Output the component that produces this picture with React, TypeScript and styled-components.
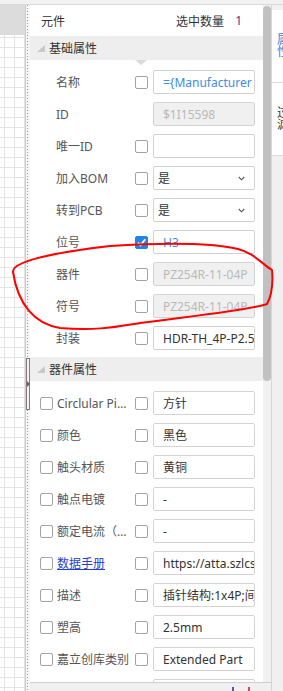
import styled, { createGlobalStyle } from "styled-components";

const GlobalStyle = createGlobalStyle`
  html, body {
    margin: 0;
    padding: 0;
  }
  body {
    font-family: "Noto Sans", "Noto Sans CJK SC", sans-serif;
    font-size: 12px;
    color: #333;
    background: #efefef;
  }
  * {
    box-sizing: border-box;
  }
`;

const Page = styled.div`
  position: relative;
  width: 283px;
  height: 691px;
  overflow: hidden;
  display: flex;
  flex-direction: column;
`;

const TopStrip = styled.div`
  height: 5px;
  flex-shrink: 0;
  background: #f2f2f2;
  border-bottom: 1px solid #d9d9d9;
`;

const Main = styled.div`
  flex: 1;
  min-height: 0;
  display: flex;
`;

const Canvas = styled.div`
  width: 26px;
  flex-shrink: 0;
  display: flex;
  flex-direction: column;
  border-right: 1px solid #cbcbcb;
`;

const Ruler = styled.div`
  height: 30px;
  background: #dcdcdc;
`;

const Grid = styled.div`
  flex: 1;
  background-color: #fff;
  background-image: linear-gradient(#e3e3e3 1px, transparent 1px),
    linear-gradient(90deg, #e3e3e3 1px, transparent 1px);
  background-size: 10px 10px;
  background-position: 4px 2px;
`;

const Splitter = styled.div`
  position: relative;
  width: 4px;
  flex-shrink: 0;
  background-color: #f7f7f7;
  background-image: linear-gradient(#9a9a9a 50%, transparent 50%);
  background-size: 1px 3px;
  background-repeat: repeat-y;
  background-position: 1px 0;
`;

const Handle = styled.div`
  position: absolute;
  left: 0;
  top: 353px;
  width: 4px;
  height: 52px;
  border: 1px solid #8c7878;
  background: #f3f3f3;
  display: flex;
  align-items: center;
  &::after {
    content: "";
    border-left: 3px solid #6e5e5e;
    border-top: 3px solid transparent;
    border-bottom: 3px solid transparent;
  }
`;

const Middle = styled.div`
  flex: 1;
  min-width: 0;
  display: flex;
  flex-direction: column;
`;

const Body = styled.div`
  flex: 1;
  min-height: 0;
  display: flex;
`;

const Panel = styled.div`
  flex: 1;
  min-width: 0;
  background: #fff;
  overflow: hidden;
  display: flex;
  flex-direction: column;
`;

const PanelHeader = styled.div`
  height: 31px;
  flex-shrink: 0;
  display: flex;
  align-items: center;
  justify-content: space-between;
  padding: 0 21px 0 11px;
  color: #333;
`;

const Count = styled.span`
  display: flex;
  gap: 11px;
  b {
    font-weight: 400;
    color: #4e3b8c;
  }
`;

const SectionHeader = styled.div<{ $pointer?: boolean }>`
  position: relative;
  height: 24px;
  flex-shrink: 0;
  display: flex;
  align-items: center;
  gap: 4px;
  padding-left: 7px;
  background: #eeeeee;
  color: #333;
  &::before {
    content: "";
    border-bottom: 7px solid #c9c9c9;
    border-left: 8px solid transparent;
  }
  ${(p) =>
    p.$pointer &&
    `&::after {
      content: "";
      position: absolute;
      left: 105px;
      top: 24px;
      border-top: 5px solid #dadada;
      border-left: 6px solid transparent;
      border-right: 6px solid transparent;
    }`}
`;

const SectionBody = styled.div`
  padding: 6px 0 3px;
  flex-shrink: 0;
`;

const FieldRow = styled.div<{ $lead?: boolean }>`
  height: 32px;
  display: flex;
  align-items: center;
  padding-left: ${(p) => (p.$lead ? "10px" : "26px")};
`;

const Label = styled.span<{ $lead?: boolean; $link?: boolean }>`
  width: ${(p) => (p.$lead ? "78px" : "79px")};
  flex-shrink: 0;
  padding-right: 2px;
  color: ${(p) => (p.$link ? "#1f3fd6" : "#555")};
  text-decoration: ${(p) => (p.$link ? "underline" : "none")};
  white-space: nowrap;
  overflow: hidden;
  text-overflow: ellipsis;
`;

const CheckSlot = styled.span`
  width: 13px;
  height: 13px;
  flex-shrink: 0;
  margin-right: 5px;
`;

const Checkbox = styled.span<{ $checked?: boolean; $lead?: boolean }>`
  width: 13px;
  height: 13px;
  flex-shrink: 0;
  display: flex;
  align-items: center;
  justify-content: center;
  margin-right: ${(p) => (p.$lead ? "4px" : "5px")};
  border: 1px solid ${(p) => (p.$checked ? "#1f86e8" : "#a3a3a3")};
  border-radius: 2px;
  background: ${(p) => (p.$checked ? "#1f86e8" : "#fff")};
`;

type Tone = "plain" | "link" | "disabled";

const ValueBox = styled.div<{ $tone: Tone; $select?: boolean }>`
  width: 102px;
  height: 24px;
  flex-shrink: 0;
  display: flex;
  align-items: center;
  justify-content: space-between;
  padding: ${(p) => (p.$select ? "0 9px 0 4px" : "0 1px 0 9px")};
  border: 1px solid #d3d3d3;
  border-radius: 2px;
  background: ${(p) => (p.$tone === "disabled" ? "#f0f0f0" : "#fff")};
  color: ${(p) =>
    p.$tone === "link" ? "#3d8ce6" : p.$tone === "disabled" ? "#b9b9b9" : "#333"};
  white-space: nowrap;
  overflow: hidden;
`;

const ScrollTrack = styled.div`
  width: 8px;
  flex-shrink: 0;
  background: #f1f1f1;
  padding-top: 1px;
`;

const Thumb = styled.div`
  height: 375px;
  border-radius: 4px;
  background: #c1c1c1;
`;

const BottomBar = styled.div`
  height: 9px;
  flex-shrink: 0;
  display: flex;
  align-items: flex-end;
  justify-content: flex-end;
  gap: 14px;
  padding-right: 21px;
  background: #f0f0f0;
  border-top: 1px solid #cfcfcf;
`;

const Mark = styled.span<{ $color: string }>`
  width: 2px;
  height: 4px;
  background: ${(p) => p.$color};
`;

const RightStrip = styled.div`
  width: 12px;
  flex-shrink: 0;
  display: flex;
  flex-direction: column;
  padding-top: 5px;
  background: #f0f0f0;
  border-left: 1px solid #d6d6d6;
  overflow: hidden;
`;

const Tab = styled.div<{ $active?: boolean }>`
  height: 73px;
  flex-shrink: 0;
  display: flex;
  flex-direction: column;
  justify-content: center;
  padding-left: 5px;
  background: #fff;
  border-bottom: 1px solid #dcdcdc;
  color: ${(p) => (p.$active ? "#3e7fd6" : "#333")};
  span {
    display: block;
    width: 12px;
    line-height: 12px;
  }
`;

const Annotation = styled.svg`
  position: absolute;
  left: 0;
  top: 0;
  pointer-events: none;
`;

const Chevron = () => (
  <svg width="7" height="5" viewBox="0 0 7 5">
    <polyline points="0.8,1 3.5,3.8 6.2,1" fill="none" stroke="#555" strokeWidth="1.1" />
  </svg>
);

const Tick = () => (
  <svg width="11" height="11" viewBox="0 0 11 11">
    <polyline points="2,5.6 4.5,8.4 9.2,2.2" fill="none" stroke="#fff" strokeWidth="1.8" />
  </svg>
);

type Field = {
  label: string;
  value?: string;
  tone?: Tone;
  check?: boolean;
  checked?: boolean;
  select?: boolean;
  link?: boolean;
};

const basic: Field[] = [
  { label: "名称", value: "={Manufacturer Part}", tone: "link", check: true },
  { label: "ID", value: "$1I15598", tone: "disabled" },
  { label: "唯一ID", value: "", check: true },
  { label: "加入BOM", value: "是", check: true, select: true },
  { label: "转到PCB", value: "是", check: true, select: true },
  { label: "位号", value: "H3", tone: "link", check: true, checked: true },
  { label: "器件", value: "PZ254R-11-04P", tone: "disabled", check: true },
  { label: "符号", value: "PZ254R-11-04P", tone: "disabled", check: true },
  { label: "封装", value: "HDR-TH_4P-P2.54-V-M", check: true },
];

const device: Field[] = [
  { label: "Circlular Pin Shape", value: "方针" },
  { label: "颜色", value: "黑色" },
  { label: "触头材质", value: "黄铜" },
  { label: "触点电镀", value: "-" },
  { label: "额定电流（A）", value: "-" },
  { label: "数据手册", value: "https://atta.szlcsc.com/upload", link: true },
  { label: "描述", value: "插针结构:1x4P;间距:2.54mm" },
  { label: "塑高", value: "2.5mm" },
  { label: "嘉立创库类别", value: "Extended Part" },
  { label: "供应商", value: "LCSC" },
];

export default function App() {
  return (
    <>
      <GlobalStyle />
      <Page>
        <TopStrip />
        <Main>
          <Canvas>
            <Ruler />
            <Grid />
          </Canvas>
          <Splitter>
            <Handle />
          </Splitter>
          <Middle>
            <Body>
              <Panel>
                <PanelHeader>
                  <span>元件</span>
                  <Count>
                    选中数量<b>1</b>
                  </Count>
                </PanelHeader>
                <SectionHeader $pointer>基础属性</SectionHeader>
                <SectionBody>
                  {basic.map((f) => (
                    <FieldRow key={f.label}>
                      <Label>{f.label}</Label>
                      {f.check ? (
                        <Checkbox $checked={f.checked}>{f.checked && <Tick />}</Checkbox>
                      ) : (
                        <CheckSlot />
                      )}
                      <ValueBox $tone={f.tone ?? "plain"} $select={f.select}>
                        <span>{f.value}</span>
                        {f.select && <Chevron />}
                      </ValueBox>
                    </FieldRow>
                  ))}
                </SectionBody>
                <SectionHeader>器件属性</SectionHeader>
                <SectionBody>
                  {device.map((f) => (
                    <FieldRow key={f.label} $lead>
                      <Checkbox $lead />
                      <Label $lead $link={f.link}>
                        {f.label}
                      </Label>
                      <Checkbox />
                      <ValueBox $tone="plain">
                        <span>{f.value}</span>
                      </ValueBox>
                    </FieldRow>
                  ))}
                </SectionBody>
              </Panel>
              <ScrollTrack>
                <Thumb />
              </ScrollTrack>
            </Body>
            <BottomBar>
              <Mark $color="#6b4e9e" />
              <Mark $color="#e0405a" />
            </BottomBar>
          </Middle>
          <RightStrip>
            <Tab $active>
              <span>属</span>
              <span>性</span>
            </Tab>
            <Tab>
              <span>过</span>
              <span>滤</span>
            </Tab>
          </RightStrip>
        </Main>
        <Annotation width="283" height="691" viewBox="0 0 283 691">
          <path
            d="M 110 246 C 160 243, 212 243, 238 249 C 254 253, 262 264, 272 270 C 273 282, 272 295, 267 304 C 250 310, 200 315, 140 323 C 115 327, 95 331, 60 328 C 35 324, 18 305, 13 272 C 12 262, 50 253, 110 246"
            fill="none"
            stroke="#f00"
            strokeWidth="2"
            strokeLinecap="round"
          />
        </Annotation>
      </Page>
    </>
  );
}
